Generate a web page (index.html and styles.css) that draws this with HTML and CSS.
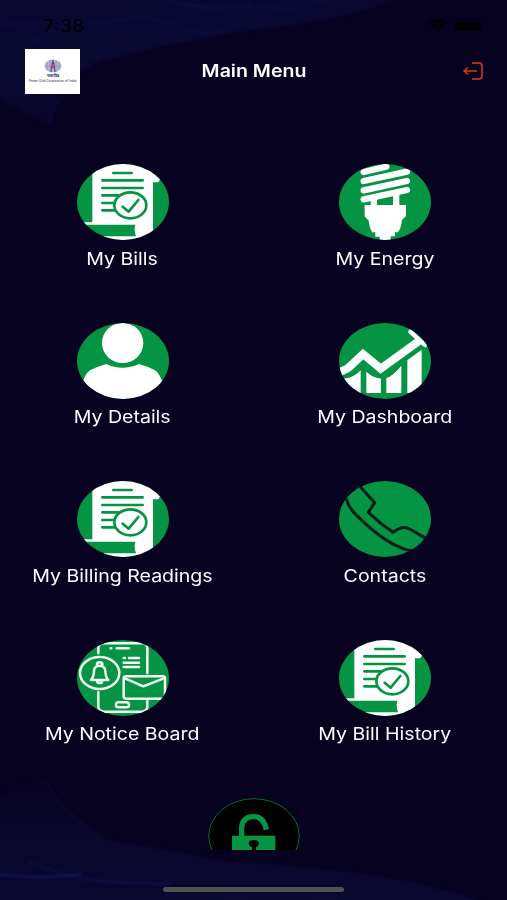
FILE: index.html
```html
<!DOCTYPE html>
<html lang="en">

<head>
    <meta charset="UTF-8" />
    <meta name="viewport" content="width=device-width, initial-scale=1.0" />
    <title>Main Menu</title>
    <link rel="stylesheet" href="styles.css">
</head>

<body>

    <!-- background waves -->
    <svg class="waves" viewBox="0 0 507 900" aria-hidden="true">
        <defs>
            <linearGradient id="topWave" gradientUnits="userSpaceOnUse" x1="60" y1="0" x2="90" y2="120">
                <stop offset="0" stop-color="#09072f" />
                <stop offset=".5" stop-color="#0a0932" />
                <stop offset="1" stop-color="#080326" />
            </linearGradient>
            <linearGradient id="bottomWave" x1="0" y1="0" x2="0" y2="1">
                <stop offset="0" stop-color="#080324" />
                <stop offset=".5" stop-color="#09072b" />
                <stop offset="1" stop-color="#0a082f" />
            </linearGradient>
            <filter id="soft" color-interpolation-filters="sRGB">
                <feGaussianBlur stdDeviation="0.8" />
            </filter>
        </defs>
        <g filter="url(#soft)">
            <path d="M-5 -5H408Q350 20 253 30Q160 44 95 63Q58 80 49 125Q30 118 -5 95Z" fill="url(#topWave)" />
            <path d="M165 -2Q200 10 253 5L340 -4V-2Q300 12 253 16Q190 14 165 -2Z" fill="#0b0b3a" opacity=".6" />
            <path d="M-5 28Q30 18 60 22T120 20T180 27T253 20" fill="none" stroke="#10134a" stroke-width="1.5" opacity=".7" />
            <path d="M165 0Q200 10 253 5" fill="none" stroke="#12164f" stroke-width="1.5" opacity=".7" />
            <path d="M30 45Q42 33 65 27M49 124Q53 104 66 95" fill="none" stroke="#10134a" stroke-width="1.5" opacity=".7" />
            <path d="M-5 802Q20 780 45 781Q65 815 106 840Q150 846 220 861Q300 865 370 875Q440 885 490 905H-5Z" fill="url(#bottomWave)" />
            <path d="M45 781Q65 815 106 840" fill="none" stroke="#0e1038" stroke-width="1" />
            <path d="M-5 874Q45 880 82 874" fill="none" stroke="#171b66" stroke-width="1.5" />
            <path d="M28 861Q70 879 100 881T170 884" fill="none" stroke="#151a5c" stroke-width="1.3" opacity=".8" />
            <path d="M200 899Q270 892 350 898" fill="none" stroke="#0e1244" />
        </g>
    </svg>

    <!-- shared icon -->
    <svg class="sprite" aria-hidden="true">
        <symbol id="bill" viewBox="51 28 276 228">
            <path fill="#fff" d="M97 20H325V76H299L295 83H279V256H70V245H228Q221 228 226 210H60V203H97Z" />
            <path fill="none" stroke="#049443" stroke-width="8" stroke-linecap="round" d="M160 55H215M127 77H248M127 100H248M127 122H174M127 145H160M127 167H166" />
            <ellipse cx="211" cy="152" rx="48" ry="39" fill="#fff" stroke="#049443" stroke-width="8" />
            <path fill="none" stroke="#049443" stroke-width="8" stroke-linecap="round" stroke-linejoin="round" d="M188 156L206 171L235 136" />
        </symbol>
    </svg>

    <div class="status-bar">
        <span class="time">7:38</span>
        <div class="status-icons">
            <svg width="20" height="14" viewBox="0 0 20 14">
                <path d="M1 5Q10-2 19 5M4 8Q10 3 16 8" fill="none" stroke="#000" stroke-width="2.4" />
                <path d="M6.500 10Q10 7.500 13.500 10L10 13Z" />
            </svg>
            <span class="battery"></span>
        </div>
    </div>

    <header>
        <div class="logo">
            <svg width="20" height="14" viewBox="0 0 20 14">
                <ellipse cx="10" cy="7" rx="8.500" ry="6.500" fill="#b5b8d2" />
                <path d="M4 3V11M7 1V13M13 1V13M16 3V11M2 7H18" stroke="#8f94b8" stroke-width=".8" />
                <path d="M8 13L10 1L12 13M8 5H12M7.500 8H12.500" fill="none" stroke="#4a4f93" stroke-width="1.200" />
                <path d="M9 5H11V9H9Z" fill="#c5485c" />
            </svg>
            <span class="logo-mark">पावरग्रिड</span>
            <span class="logo-name">Power Grid Corporation of India</span>
        </div>
        <h1>Main Menu</h1>
        <a class="logout" href="#" aria-label="Logout">
            <svg width="20" height="18" viewBox="0 0 20 18">
                <path d="M9 1H16Q19 1 19 4V14Q19 17 16 17H9M14 9H1M5 5.500L1 9L5 12.500" fill="none" stroke="#d63f14" stroke-width="1.500" />
            </svg>
        </a>
    </header>

    <main>
        <div class="menu">
            <a class="item" href="#">
                <svg class="icon"><use href="#bill" /></svg>
                <span class="label">My Bills</span>
            </a>
            <a class="item" href="#">
                <svg class="icon" viewBox="58 28 276 228">
                    <path fill="none" stroke="#fff" stroke-width="19" stroke-linecap="round" d="M132 52L200 36M132 79L262 51M132 107L262 79M132 134L262 106" />
                    <path fill="#fff" d="M153 130L172 126V151H220V122L239 116V151H259V184L247 196Q245 219 235 233H226V245H213V256H180V246H167V233H157Q148 215 147 198L135 185V151H153Z" />
                </svg>
                <span class="label">My Energy</span>
            </a>
            <a class="item" href="#">
                <svg class="icon" viewBox="51 23 276 228">
                    <ellipse cx="188" cy="83" rx="62" ry="60" fill="#fff" />
                    <path fill="#fff" d="M60 220Q74 175 91 164Q112 154 139 146Q187 169 237 146Q265 154 284 164Q300 172 314 220V260H60Z" />
                </svg>
                <span class="label">My Details</span>
            </a>
            <a class="item" href="#">
                <svg class="icon" viewBox="88 23 276 228">
                    <path fill="none" stroke="#fff" stroke-width="24" d="M82 172Q106 166 119 155L160 116L213 160L333 73" />
                    <path fill="none" stroke="#fff" stroke-width="13" stroke-linecap="round" d="M302 49L346 89" />
                    <path fill="#fff" d="M95 190L117 188Q138 181 153 165V233H95ZM170 169Q182 180 192 184Q205 189 214 190V233H170ZM230 188Q250 182 275 151V233H230ZM293 135L336 103V233H293Z" />
                </svg>
                <span class="label">My Dashboard</span>
            </a>
            <a class="item" href="#">
                <svg class="icon"><use href="#bill" /></svg>
                <span class="label">My Billing Readings</span>
            </a>
            <a class="item" href="#">
                <svg class="icon" viewBox="58 19 276 228">
                    <path fill="none" stroke="#041b17" stroke-width="9" stroke-linejoin="round" d="M120 34L165 84L146 113Q181 146 220 173L240 161Q255 155 270 163L320 192M81 72Q83 98 124 135Q197 205 257 224Q270 229 282 227" />
                </svg>
                <span class="label">Contacts</span>
            </a>
            <a class="item" href="#">
                <svg class="icon" viewBox="51 30 276 228">
                    <g fill="none" stroke="#f4fff4" stroke-width="7.5" stroke-linecap="round" stroke-linejoin="round">
                        <path d="M115 70V55Q115 40 132 40H246Q262 40 262 56V130M115 187V229Q115 245 132 245H246Q262 245 262 229V214" />
                        <path d="M152 55H154M170 55H207M191 84H195M207 84H237M191 98H237M191 111H237" />
                        <ellipse cx="119" cy="129" rx="59" ry="48" />
                        <path d="M93 150Q101 143 102 123Q103 107 119 107Q135 107 136 123Q137 143 145 150ZM111 105Q109 97 119 97Q129 97 127 105M112 157Q119 161 126 157" />
                        <rect x="191" y="139" width="124" height="67" rx="7" />
                        <path d="M195 145L250 169L311 145" />
                        <rect x="168" y="217" width="39" height="15" rx="7" />
                    </g>
                </svg>
                <span class="label">My Notice Board</span>
            </a>
            <a class="item" href="#">
                <svg class="icon"><use href="#bill" /></svg>
                <span class="label">My Bill History</span>
            </a>
        </div>
        <a class="item item-last" href="#" aria-label="Password">
            <svg class="icon icon-dark" viewBox="54 55 276 228">
                <ellipse cx="192" cy="169" rx="136" ry="112" fill="#000" stroke="#087343" stroke-width="3" />
                <path d="M155 170V142Q159 111 190 111Q222 111 229 150" fill="none" stroke="#049443" stroke-width="16" />
                <path d="M126 168H256V255H126Z" fill="#049443" />
                <path d="M176 189Q178 181 191 181Q206 182 207 191Q206 199 198 203V230H186V203Q177 199 176 189Z" fill="#000" />
            </svg>
        </a>
    </main>

    <footer>
        <div class="home-indicator"></div>
    </footer>

</body>

</html>
```

FILE: styles.css
```css
* {
    box-sizing: border-box;
}

body {
    margin: 0;
    height: 900px;
    display: flex;
    flex-direction: column;
    overflow: hidden;
    position: relative;
    font-family: Inter, 'Liberation Sans', sans-serif;
    background-color: #080221;
    color: #fff;
}

a {
    color: inherit;
    text-decoration: none;
}

.waves {
    position: absolute;
    top: 0;
    left: 0;
    width: 507px;
    height: 900px;
    z-index: -1;
}

.sprite {
    position: absolute;
    width: 0;
    height: 0;
}

.status-bar {
    height: 48px;
    padding: 4px 26px 0 43px;
    display: flex;
    justify-content: space-between;
    align-items: center;
    color: #02020a;
}

.time {
    font-size: 17px;
    font-weight: 600;
    transform: scaleX(1.15);
    transform-origin: left;
}

.status-icons {
    display: flex;
    align-items: center;
    gap: 7px;
}

.battery {
    width: 26px;
    height: 9px;
    border-radius: 3px;
    background: #000;
}

header {
    height: 46px;
    padding: 0 24px 0 25px;
    display: grid;
    grid-template-columns: 55px 1fr 55px;
    align-items: center;
}

.logo {
    height: 45px;
    padding-top: 10px;
    display: flex;
    flex-direction: column;
    align-items: center;
    background: #fff;
    color: #25255c;
    overflow: hidden;
}

.logo svg {
    flex: none;
}

.logo-mark {
    font-size: 4px;
    line-height: 5px;
    font-weight: bold;
}

.logo-name {
    font-size: 3.2px;
    line-height: 6px;
    white-space: nowrap;
}

h1 {
    margin: 0;
    font-size: 17px;
    font-weight: 600;
    text-align: center;
    transform: scaleX(1.15);
}

.logout {
    justify-self: end;
    display: flex;
}

main {
    height: 756px;
    padding-top: 70px;
    overflow: hidden;
}

.menu {
    display: grid;
    grid-template-columns: 245px 245px;
    grid-auto-rows: 158.6px;
    column-gap: 17.5px;
}

.item {
    display: flex;
    flex-direction: column;
    align-items: center;
}

.icon {
    width: 92px;
    height: 76px;
    border-radius: 50%;
    background: #049443;
}

.icon-dark {
    background: #000;
}

.label {
    margin-top: 7.5px;
    font-size: 17px;
    line-height: 22px;
    white-space: nowrap;
    transform: scaleX(1.15);
}

footer {
    height: 50px;
    padding-top: 37px;
    display: flex;
    justify-content: center;
}

.home-indicator {
    width: 181px;
    height: 5px;
    border-radius: 3px;
    background: #505050;
}
```
